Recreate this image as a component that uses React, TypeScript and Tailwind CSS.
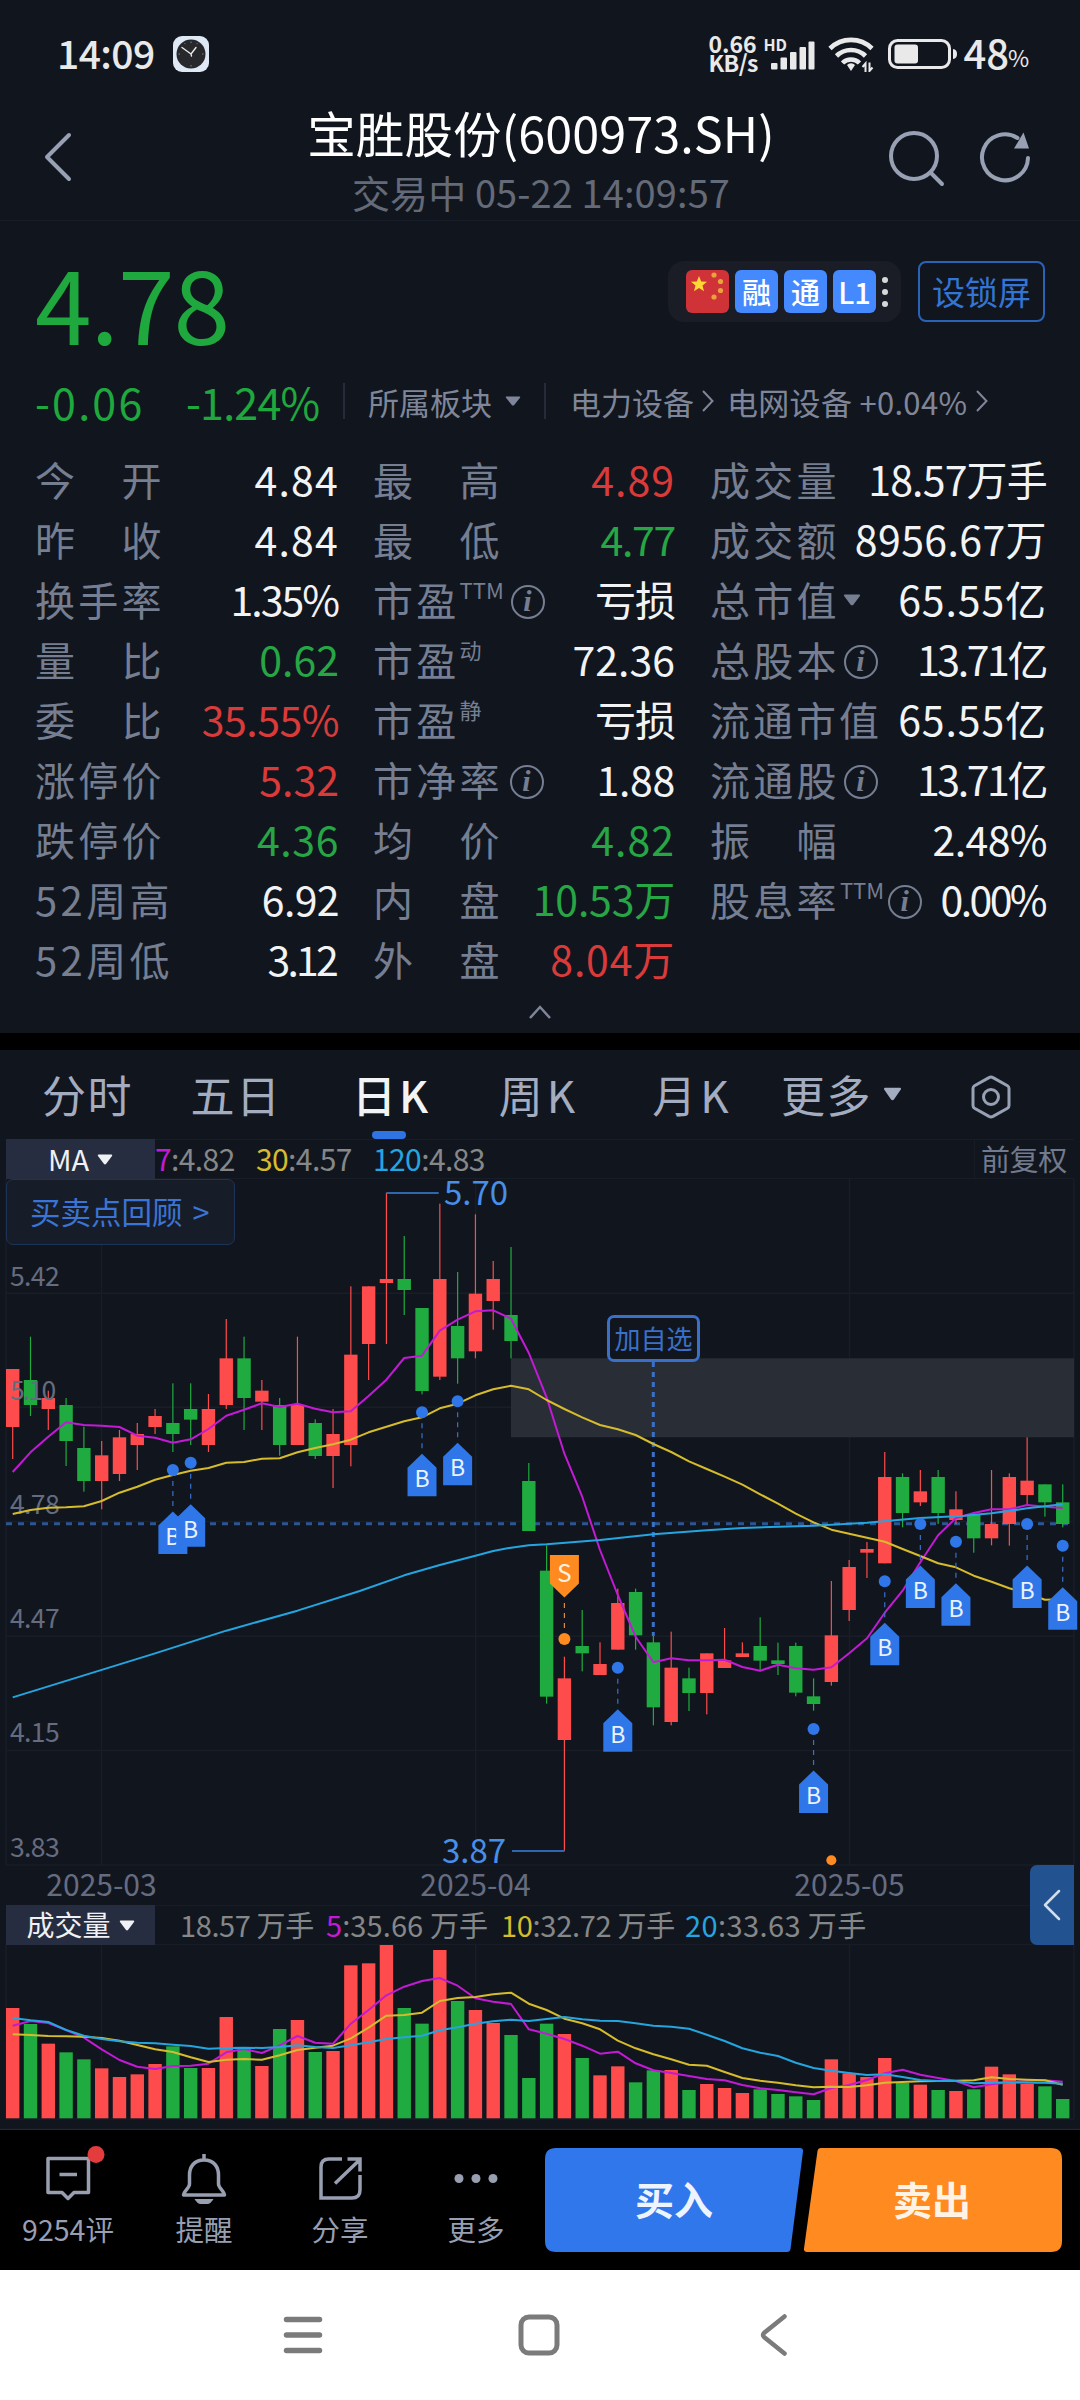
import type { ReactNode } from "react";

const RED = "#fe4b4b";
const GREEN = "#1fab3f";
const PURPLE = "#c31ad6";
const YELLOW = "#d6bc2c";
const CYAN = "#25a5e0";
const BLUE = "#2f77e9";

/* ---------- chart data ---------- */

const STEP = 17.797;
const X0 = 12.7;
const cx = (i: number) => X0 + STEP * i;
// Price-panel values are stored in thirds of a pixel below y = 1180.
const py = (v: number) => 1180 + v / 3;
// Volume-panel values are stored in thirds of a pixel below y = 1860.
const vy = (v: number) => 1860 + v / 3;

// [rising, body top, body bottom, high, low]
const candles: [number, number, number, number, number][] = [
  [1, 567, 741, 567, 837], [0, 600, 675, 470, 708], [1, 654, 687, 632, 750], [0, 675, 783, 654, 858],
  [0, 804, 903, 740, 935], [1, 826, 903, 783, 988], [1, 772, 882, 750, 903], [1, 762, 795, 729, 870],
  [1, 708, 741, 687, 762], [0, 729, 762, 610, 816], [0, 687, 719, 610, 795], [1, 687, 795, 642, 816],
  [1, 535, 675, 417, 687], [0, 535, 654, 470, 750], [1, 632, 665, 600, 750], [0, 675, 795, 654, 827],
  [1, 675, 795, 470, 795], [0, 729, 828, 718, 837], [1, 762, 828, 687, 924], [1, 524, 795, 319, 859],
  [1, 319, 492, 319, 600], [1, 297, 309, 38, 492], [0, 297, 330, 168, 405], [0, 384, 633, 384, 643],
  [1, 297, 590, 71, 600], [0, 438, 535, 276, 611], [1, 341, 514, 103, 535], [1, 297, 363, 243, 449],
  [0, 405, 483, 201, 535], [0, 903, 1053, 849, 1053], [0, 1172, 1550, 1096, 1571], [1, 1495, 1680, 1430, 2013],
  [0, 1398, 1420, 1290, 1474], [1, 1452, 1485, 1387, 1485], [1, 1269, 1409, 1226, 1409], [0, 1236, 1366, 1226, 1409],
  [0, 1387, 1582, 1366, 1636], [1, 1463, 1626, 1355, 1636], [0, 1495, 1539, 1463, 1593], [1, 1420, 1539, 1420, 1603],
  [1, 1441, 1464, 1344, 1464], [1, 1420, 1431, 1387, 1431], [0, 1398, 1442, 1312, 1474], [0, 1441, 1452, 1388, 1485],
  [0, 1398, 1538, 1388, 1549], [0, 1549, 1572, 1495, 1592], [1, 1366, 1506, 1203, 1517], [1, 1161, 1290, 1140, 1323],
  [1, 1107, 1118, 1086, 1194], [1, 891, 1150, 816, 1150], [0, 891, 999, 880, 1042], [1, 934, 967, 870, 978],
  [0, 891, 999, 870, 1032], [1, 988, 1020, 934, 1032], [0, 1005, 1075, 1000, 1118], [1, 1032, 1075, 870, 1096],
  [1, 891, 1032, 880, 1097], [1, 902, 945, 772, 972], [0, 913, 967, 913, 1010], [0, 967, 1032, 913, 1042],
];

const ma7 = [
  876, 817, 770, 727, 735, 737, 741, 767, 773, 788, 778, 747, 707, 689, 670, 681, 671, 686, 697, 694,
  648, 599, 534, 527, 452, 419, 394, 391, 416, 519, 652, 821, 950, 1110, 1245, 1370, 1447, 1435, 1441, 1441,
  1439, 1461, 1472, 1454, 1465, 1469, 1462, 1420, 1375, 1298, 1232, 1147, 1066, 1014, 999, 988, 988, 975, 980, 984,
];
const ma30 = [
  1002, 990, 983, 982, 979, 963, 938, 920, 899, 885, 872, 864, 848, 846, 836, 835, 817, 804, 793, 779,
  757, 740, 724, 712, 685, 671, 646, 628, 617, 628, 660, 687, 712, 735, 748, 765, 792, 816, 844, 867,
  890, 914, 943, 971, 1001, 1027, 1049, 1061, 1073, 1085, 1107, 1128, 1150, 1162, 1187, 1205, 1225, 1240, 1259, 1258,
];
const ma120: [number, number][] = [
  [0, 1552], [4, 1486], [8, 1420], [12, 1352], [16, 1292], [19.5, 1233], [22, 1186], [24, 1155], [26, 1127],
  [27, 1113], [28, 1103], [29, 1096], [30, 1093], [33, 1080], [36, 1063], [39, 1051], [41, 1044], [45, 1037],
  [48, 1028], [51, 1014], [53.5, 1007], [55, 1000], [57, 985], [59, 973],
];

const volume = [
  444, 492, 551, 577, 598, 625, 651, 643, 612, 559, 624, 624, 471, 562, 618, 507, 480, 576, 573, 316,
  310, 255, 444, 491, 270, 423, 450, 489, 525, 654, 491, 522, 594, 646, 619, 667, 631, 630, 690, 672,
  684, 699, 688, 702, 709, 720, 598, 640, 651, 594, 669, 674, 690, 693, 688, 620, 643, 672, 679, 717,
];
const vma5 = [
  497, 483, 489, 510, 533, 568, 600, 620, 627, 618, 617, 611, 577, 567, 579, 556, 528, 548, 551, 491,
  450, 406, 380, 363, 354, 377, 415, 425, 432, 508, 521, 537, 557, 581, 575, 610, 631, 639, 648, 657,
  661, 675, 685, 690, 697, 703, 684, 675, 660, 640, 629, 644, 654, 663, 682, 673, 667, 663, 661, 665,
];
const vma10 = [
  523, 525, 528, 529, 530, 534, 542, 555, 568, 576, 592, 606, 599, 597, 599, 586, 570, 563, 557, 535,
  503, 467, 465, 458, 423, 414, 411, 403, 398, 431, 450, 476, 490, 508, 542, 565, 583, 598, 614, 617,
  636, 654, 662, 668, 676, 682, 680, 681, 676, 668, 666, 664, 663, 662, 661, 652, 657, 659, 661, 674,
];
const vma20 = [
  474, 481, 486, 510, 527, 537, 544, 548, 550, 554, 558, 566, 564, 563, 564, 561, 556, 561, 564, 556,
  547, 537, 532, 527, 511, 502, 491, 484, 479, 483, 477, 471, 478, 482, 483, 490, 497, 500, 506, 524,
  543, 565, 578, 588, 608, 624, 632, 639, 645, 643, 651, 660, 663, 663, 670, 668, 667, 668, 668, 671,
];

const buys: [number, number][] = [
  [9, 870], [10, 848], [23, 697], [25, 664], [34, 1463], [45, 1647], [49, 1204], [51, 1032], [53, 1085], [57, 1032], [59, 1097],
];

const line = (vals: number[], y: (v: number) => number) =>
  vals.map((v, i) => `${cx(i).toFixed(1)},${y(v).toFixed(1)}`).join(" ");

/* ---------- small pieces ---------- */

function Triangle({ w, h, className }: { w: number; h: number; className?: string }) {
  return (
    <svg width={w} height={h} viewBox="0 0 16 11" preserveAspectRatio="none" className={className}>
      <path d="M1.5 0.5h13q1.2 0.3 0.5 1.4L9.2 9.8q-1.2 1.2-2.4 0L1 1.9Q0.3 0.8 1.5 0.5z" fill="currentColor" />
    </svg>
  );
}

function Info({ className = "" }: { className?: string }) {
  return (
    <span
      className={`flex h-[34px] w-[34px] shrink-0 items-center justify-center rounded-full border-2 border-[#767e92] pb-[2px] pr-[1px] font-['Liberation_Serif',serif] text-[30px] leading-none font-bold italic ${className}`}
    >
      i
    </span>
  );
}

function Chevron({ className = "" }: { className?: string }) {
  return (
    <svg width="14" height="24" viewBox="0 0 14 24" className={className}>
      <path d="M2 2l9.5 10L2 22" fill="none" stroke="currentColor" strokeWidth="2" />
    </svg>
  );
}

/* ---------- status bar and title ---------- */

function StatusBar() {
  return (
    <div className="flex h-[100px] items-center pt-[8px] pr-[50px] pl-[57px] text-[#e9e9ea]">
      <span className="-mt-[4px] w-[116px] text-[39px] leading-none font-medium tracking-[-0.6px]">14:09</span>
      <svg width="36" height="36" viewBox="0 0 36 36">
        <rect width="36" height="36" rx="9" fill="#dfe8f5" />
        <circle cx="18" cy="18" r="14.5" fill="#26282b" />
        <path d="M18 18L9 11.5M18 18l5-6.5M18 18l0.5 2" stroke="#e8e8e8" strokeWidth="1.4" strokeLinecap="round" />
        <path d="M18 5.500v1.500M18 29v1.500M5.500 18h1.500M29 18h1.500M11.700 7.200l.5.900M24.300 7.200l-.5.900" stroke="#9a9a9a" strokeWidth="0.8" />
      </svg>
      <div className="ml-auto flex items-center">
        <div className="-mt-[3px] flex w-[56px] flex-col text-[23px] leading-[19px] font-bold">
          <span>0.66</span>
          <span className="tracking-[-0.6px]">KB/s</span>
        </div>
        <div className="relative mr-[13px] h-[34px] w-[51px]">
          <span className="absolute top-0 left-[-1px] text-[16px] leading-[14px] font-bold">HD</span>
          <svg width="51" height="34" viewBox="0 0 51 34" fill="currentColor" className="absolute inset-0">
            <rect x="7" y="26" width="6.500" height="6.500" rx="1" />
            <rect x="16.500" y="20.500" width="6.500" height="12" rx="1" />
            <rect x="26" y="15" width="6.500" height="17.500" rx="1" />
            <rect x="35.500" y="10" width="6.500" height="22.500" rx="1" />
            <rect x="44.500" y="4.500" width="6" height="28" rx="1" />
          </svg>
        </div>
        <svg width="46" height="35" viewBox="0 0 46 35" className="mr-[14px]">
          <g fill="none" stroke="currentColor" strokeWidth="4.600">
            <path d="M2 11.500a30 30 0 0 1 42 0" />
            <path d="M8.500 19a20.500 20.500 0 0 1 29 0" />
            <path d="M14.500 26a12 12 0 0 1 17 0" />
          </g>
          <path d="M19 28a5.500 5.500 0 0 1 8 0l-4 6z" fill="currentColor" />
          <path d="M37.500 35V26.500l-3 3.500M41.500 25.500v8.500l3-3.500" stroke="currentColor" strokeWidth="2" fill="none" />
        </svg>
        <svg width="70" height="30" viewBox="0 0 70 30" className="mr-[5px]">
          <rect x="1.500" y="1.500" width="60" height="27" rx="8" fill="none" stroke="currentColor" strokeWidth="3" />
          <rect x="6.500" y="5.500" width="23.500" height="19" rx="3" fill="currentColor" />
          <path d="M65 10q4 0.500 4 5t-4 5z" fill="currentColor" />
        </svg>
        <span className="-mt-[5px] text-[40px] leading-none font-medium">48</span>
        <span className="mt-[7px] -ml-[1px] w-[22px] text-[23px] leading-none">%</span>
      </div>
    </div>
  );
}

function Header() {
  return (
    <div className="flex h-[121px] items-start border-b border-[#171c26] pl-[43px]">
      <svg width="30" height="50" viewBox="0 0 30 50" fill="none" className="mt-[32px]">
        <path d="M26 3L4 25l22 22" stroke="#98a0b4" strokeWidth="4" strokeLinecap="round" strokeLinejoin="round" />
      </svg>
      <div className="ml-[173px] flex w-[590px] flex-col items-center">
        <h1 className="mt-[4px] text-[48.500px] leading-[56px] tracking-[0.100px] whitespace-nowrap text-white">宝胜股份(600973.SH)</h1>
        <p className="mt-[10px] text-[38px] leading-[44px] tracking-[0.100px] whitespace-nowrap text-[#646a78]">交易中 05-22 14:09:57</p>
      </div>
      <svg width="60" height="60" viewBox="0 0 60 60" fill="none" className="mt-[30px] ml-[50px] shrink-0" stroke="#98a0b4" strokeWidth="4" strokeLinecap="round">
        <circle cx="28" cy="26" r="23" />
        <path d="M44.500 42.500L56 54" />
      </svg>
      <svg width="54" height="60" viewBox="0 0 54 60" fill="none" className="mt-[30px] ml-[33px] shrink-0">
        <path d="M49 28A23 23 0 1 1 38.500 8" stroke="#98a0b4" strokeWidth="4" strokeLinecap="round" />
        <path d="M44.500 2.500l5.500 16h-15z" fill="#98a0b4" />
      </svg>
    </div>
  );
}

/* ---------- quote ---------- */

function Badge({ children }: { children: ReactNode }) {
  return (
    <span className="flex h-[43px] w-[43px] items-center justify-center rounded-[6px] bg-[#4589ff] text-[29px] leading-none font-medium text-white">
      {children}
    </span>
  );
}

function Quote() {
  return (
    <>
      <div className="flex h-[141px] items-start pr-[35px] pl-[35px]">
        <span className="mt-[28px] text-[102px] leading-[104px] tracking-[-1px] text-[#1fa83d]">4.78</span>
        <div className="mt-[40px] ml-auto flex h-[61px] w-[233px] items-center gap-[6px] rounded-[16px] bg-[#1a1d26] pl-[18px]">
          <svg width="43" height="43" viewBox="0 0 43 43">
            <rect width="43" height="43" rx="6" fill="#cf3338" />
            <path d="M13 6l2.200 5.500 5.800.3-4.500 3.800 1.500 5.700-5-3.200-5 3.200 1.500-5.700L5 11.800l5.800-.3z" fill="#fdd835" />
            <g fill="#e8a33a">
              <circle cx="28" cy="5" r="2.600" />
              <circle cx="34.500" cy="11.500" r="2.600" />
              <circle cx="34.500" cy="20.500" r="2.600" />
              <circle cx="28" cy="27" r="2.600" />
            </g>
          </svg>
          <Badge>融</Badge>
          <Badge>通</Badge>
          <Badge>L1</Badge>
          <div className="flex flex-col gap-[6px]">
            <i className="h-[6px] w-[6px] rounded-full bg-[#d8d8da]" />
            <i className="h-[6px] w-[6px] rounded-full bg-[#d8d8da]" />
            <i className="h-[6px] w-[6px] rounded-full bg-[#d8d8da]" />
          </div>
        </div>
        <button className="mt-[40px] ml-[17px] h-[61px] w-[127px] rounded-[8px] border-2 border-[#2a62b8] text-[33px] leading-none whitespace-nowrap text-[#3474d4]">
          设锁屏
        </button>
      </div>
      <div className="flex h-[87px] items-center pb-[9px] pl-[35px] text-[31px] leading-none text-[#7f8699]">
        <span className="w-[151px] text-[43px] tracking-[2.200px] text-[#1fa83d]">-0.06</span>
        <span className="w-[157px] text-[43px] tracking-[-0.800px] text-[#1fa83d]">-1.24%</span>
        <i className="h-[36px] w-[2px] bg-[#262b3a]" />
        <span className="ml-[23px]">所属板块</span>
        <Triangle w={16} h={10} className="ml-[13px]" />
        <i className="ml-[23px] h-[36px] w-[2px] bg-[#262b3a]" />
        <span className="ml-[24px]">电力设备</span>
        <Chevron className="ml-[7px]" />
        <span className="ml-[12px] tracking-[0.300px] whitespace-nowrap">电网设备 +0.04%</span>
        <Chevron className="ml-[8px]" />
      </div>
    </>
  );
}

type Cell = { label: string; sup?: string; info?: boolean; menu?: boolean; value: string; cls: string };

const W = "text-[#f2f3f5]";
const R = "text-[#d93a3a]";
const G = "text-[#26a644]";

const columns: Cell[][] = [
  [
    { label: "今　开", value: "4.84", cls: `${W} tracking-[1.2px]` },
    { label: "昨　收", value: "4.84", cls: `${W} tracking-[1.2px]` },
    { label: "换手率", value: "1.35%", cls: `${W} tracking-[-2px] pr-[1px]` },
    { label: "量　比", value: "0.62", cls: `${G}` },
    { label: "委　比", value: "35.55%", cls: `${R} tracking-[-0.5px]` },
    { label: "涨停价", value: "5.32", cls: `${R}` },
    { label: "跌停价", value: "4.36", cls: `${G} tracking-[0.6px]` },
    { label: "52周高", value: "6.92", cls: `${W} tracking-[-0.6px]` },
    { label: "52周低", value: "3.12", cls: `${W} tracking-[-2.8px] pr-[3px]` },
  ],
  [
    { label: "最　高", value: "4.89", cls: `${R} tracking-[1px]` },
    { label: "最　低", value: "4.77", cls: `${G} tracking-[-1.3px]` },
    { label: "市盈", sup: "TTM", info: true, value: "亏损", cls: `${W} tracking-[-1px]` },
    { label: "市盈", sup: "动", value: "72.36", cls: `${W}` },
    { label: "市盈", sup: "静", value: "亏损", cls: `${W} tracking-[-1px]` },
    { label: "市净率", info: true, value: "1.88", cls: `${W} tracking-[-0.3px]` },
    { label: "均　价", value: "4.82", cls: `${G} tracking-[1px]` },
    { label: "内　盘", value: "10.53万", cls: `${G} tracking-[-0.2px]` },
    { label: "外　盘", value: "8.04万", cls: `${R} tracking-[0.8px]` },
  ],
  [
    { label: "成交量", value: "18.57万手", cls: `${W} tracking-[-0.8px]` },
    { label: "成交额", value: "8956.67万", cls: `${W} tracking-[0.4px]` },
    { label: "总市值", menu: true, value: "65.55亿", cls: `${W} tracking-[0.9px]` },
    { label: "总股本", info: true, value: "13.71亿", cls: `${W} tracking-[-2.4px] pr-[1px]` },
    { label: "流通市值", value: "65.55亿", cls: `${W} tracking-[0.9px]` },
    { label: "流通股", info: true, value: "13.71亿", cls: `${W} tracking-[-2.4px] pr-[1px]` },
    { label: "振　幅", value: "2.48%", cls: `${W} tracking-[-0.6px]` },
    { label: "股息率", sup: "TTM", info: true, value: "0.00%", cls: `${W} tracking-[-2.6px] pr-[2px]` },
  ],
];

function Stats() {
  return (
    <div className="flex h-[540px] pl-[35px] text-[#767e92]">
      {columns.map((col, c) => (
        <div key={c} className={["w-[304px]", "ml-[34px] w-[302px]", "ml-[35px] w-[337px]"][c]}>
          {col.map((cell) => (
            <div key={cell.label + (cell.sup ?? "")} className="flex h-[60px] items-center pb-[1px] whitespace-nowrap">
              <span
                className={`text-[40px] leading-none ${cell.label.startsWith("52") ? "tracking-[3.400px]" : cell.label.length > 3 ? "tracking-[3px]" : "tracking-[3.300px]"}`}
              >
                {cell.label}
              </span>
              {cell.sup && <sup className="top-0 -mt-[20px] text-[22px] leading-none">{cell.sup}</sup>}
              {cell.info && <Info className={c === 1 ? "mt-[7px] ml-[7px]" : "mt-[7px] ml-[4px]"} />}
              {cell.menu && <Triangle w={18} h={12} className="mt-[2px] ml-[3px]" />}
              <span className={`ml-auto text-[41px] leading-none ${cell.cls}`}>{cell.value}</span>
            </div>
          ))}
        </div>
      ))}
    </div>
  );
}

/* ---------- chart ---------- */

function Tabs() {
  return (
    <div className="relative flex h-[89px] items-center pb-[2px] pl-[12px] text-center text-[44px] leading-none tracking-[1.500px] whitespace-nowrap text-[#a4acc0]">
      <span className="w-[151px]">分时</span>
      <span className="w-[146px]">五日</span>
      <span className="relative flex h-[87px] w-[165px] items-center justify-center font-medium tracking-[3px] text-[#f2f3f5]">
        日K
        <i className="absolute -bottom-[2px] left-[63px] h-[8px] w-[34px] rounded-full bg-[#2f74e4]" />
      </span>
      <span className="w-[130px] tracking-[4px]">周K</span>
      <span className="w-[177px] tracking-[4px]">月K</span>
      <span className="flex w-[121px] items-center justify-center">
        更多
        <Triangle w={20} h={14} className="ml-[11px]" />
      </span>
      <svg width="42" height="46" viewBox="0 0 42 46" fill="none" stroke="#98a0b4" strokeWidth="3" className="mt-[6px] ml-[68px]">
        <path d="M21 3q1 0 2 .6l14.500 8.200q1.500.9 1.500 2.700v17q0 1.800-1.500 2.700L23 42.400q-2 1-4 0L4.500 34.200Q3 33.300 3 31.500v-17q0-1.800 1.500-2.700L19 3.600q1-.6 2-.6z" />
        <circle cx="21" cy="23" r="7.500" />
      </svg>
    </div>
  );
}

function MaBar() {
  return (
    <div className="mx-[6px] flex h-[40px] items-center border-y border-[#171c26] text-[30px] leading-none tracking-[-0.600px] text-[#858789]">
      <div className="flex h-[40px] w-[149px] shrink-0 items-center justify-center bg-[#272d40] pb-[2px] text-[29px] tracking-normal text-[#f0f1f4]">
        MA
        <Triangle w={16} h={11} className="mt-[3px] ml-[8px]" />
      </div>
      <span className="w-[101px] pb-[2px]">
        <span className="text-[#c31ad6]">7</span>:4.82
      </span>
      <span className="w-[117px] pb-[2px]">
        <span className="text-[#d6bc2c]">30</span>:4.57
      </span>
      <span className="pb-[2px]">
        <span className="text-[#25a5e0]">120</span>:4.83
      </span>
      <span className="ml-auto flex h-full items-center border-l border-[#171c26] pr-[7px] pb-[2px] pl-[6px] text-[29px] tracking-[-0.300px] text-[#727a8e]">
        前复权
      </span>
    </div>
  );
}

function PriceChart() {
  return (
    <div className="relative h-[726px]">
      <svg width="1080" height="726" viewBox="0 1179 1080 726" className="block" fontFamily="'Noto Sans CJK SC', sans-serif">
        <g stroke="#181d27" strokeWidth="1.500">
          {[1293.3, 1407.3, 1521.5, 1636.3, 1750.5, 1865].map((y) => (
            <line key={y} x1="6" x2="1074" y1={y} y2={y} />
          ))}
          {[6, 101.5, 475.700, 849.500, 1074].map((x) => (
            <line key={x} x1={x} x2={x} y1="1179" y2="1865" />
          ))}
        </g>
        <rect x="511" y="1358.300" width="563" height="79" fill="#292d36" />
        <line x1="6" x2="1070" y1="1523.700" y2="1523.700" stroke="#2c5596" strokeWidth="3" strokeDasharray="6 6" />
        {candles.map(([up, top, bottom, high, low], i) => (
          <g key={i} fill={up ? RED : GREEN}>
            <rect x={cx(i) - 0.6} y={py(high)} width="1.200" height={(low - high) / 3} />
            <rect x={cx(i) - 6.7} y={py(top)} width="13.400" height={(bottom - top) / 3} />
          </g>
        ))}
        <g fill="#656c80" fontSize="26.500" letterSpacing="-0.600">
          <text x="10" y="1285.500">5.42</text>
          <text x="10" y="1399.500" letterSpacing="-1.800">5.10</text>
          <text x="10" y="1514">4.78</text>
          <text x="10" y="1628">4.47</text>
          <text x="10" y="1742">4.15</text>
          <text x="10" y="1856.500">3.83</text>
        </g>
        <line x1="653.300" x2="653.300" y1="1362" y2="1636" stroke="#3a70c8" strokeWidth="3" strokeDasharray="5 5" />
        <g fill="none" strokeWidth="2" strokeLinejoin="round">
          <polyline points={line(ma7, py)} stroke={PURPLE} />
          <polyline points={line(ma30, py)} stroke={YELLOW} />
          <polyline points={ma120.map(([i, v]) => `${cx(i)},${py(v)}`).join(" ")} stroke={CYAN} />
        </g>
        <g stroke="#2f66ad" strokeWidth="2">
          <line x1="386.500" x2="438.700" y1="1193" y2="1193" />
          <line x1="512" x2="564.500" y1="1851" y2="1851" />
        </g>
        <g fill="#478fe8" fontSize="33">
          <text x="444" y="1205">5.70</text>
          <text x="442" y="1863">3.87</text>
        </g>
        {buys.map(([i, v]) => (
          <g key={i} transform={`translate(${cx(i)} ${py(v)})`}>
            <line y1="11" y2="38" stroke="#3a70c8" strokeWidth="1.200" strokeDasharray="5 5" />
            <circle r="6" fill={BLUE} />
            <path d="M0 41.500L14.500 55.500V84h-29V55.500z" fill={BLUE} />
            <text y="75" textAnchor="middle" fontSize="23" fill="#eaf2ff">B</text>
          </g>
        ))}
        <g transform={`translate(${cx(31)} ${py(1377)})`}>
          <line y1="-36" y2="-10" stroke="#e08a3a" strokeWidth="1.200" strokeDasharray="5 5" />
          <circle r="6" fill="#ff8b20" />
          <path d="M0 -41.500L14.500 -55.500V-84h-29V-55.500z" fill="#ff8b20" />
          <text y="-57" textAnchor="middle" fontSize="24" fill="#fff1e2">S</text>
        </g>
        <circle cx={cx(46)} cy={py(2041)} r="5" fill="#ff8b20" />
        <g fill="#666c80" fontSize="30" textAnchor="middle">
          <text x="101.500" y="1896">2025-03</text>
          <text x="475.500" y="1896">2025-04</text>
          <text x="849.500" y="1896">2025-05</text>
        </g>
      </svg>
      <button className="absolute top-0 left-[6px] flex h-[66px] w-[229px] items-center rounded-[7px] border border-[#1d3358] bg-[#171d28] pb-[2px] pl-[23px] text-[30.500px] leading-none whitespace-nowrap text-[#3a74d6]">
        买卖点回顾<span className="ml-[10px]">&gt;</span>
      </button>
      <div className="absolute top-[136px] left-[607px] flex h-[47px] w-[93px] items-center justify-center rounded-[7px] border-3 border-[#3a70c8] bg-[#11161e] pb-[2px] text-[26px] leading-none whitespace-nowrap text-[#3a70c8]">
        加自选
      </div>
      <div className="absolute top-[686px] right-[6px] z-10 flex h-[80px] w-[44px] items-center justify-center rounded-l-[7px] bg-[#225390]">
        <svg width="20" height="32" viewBox="0 0 20 32" fill="none">
          <path d="M17 2L3 16l14 14" stroke="#d3deec" strokeWidth="2.500" strokeLinecap="round" strokeLinejoin="round" />
        </svg>
      </div>
    </div>
  );
}

function VolumePanel() {
  return (
    <>
      <div className="mx-[6px] flex h-[40px] items-center border-y border-[#171c26] text-[29px] leading-none whitespace-nowrap text-[#858789]">
        <div className="flex h-[40px] w-[149px] shrink-0 items-center justify-center bg-[#272d40] pb-[2px] text-[28px] text-[#f0f1f4]">
          成交量
          <Triangle w={16} h={11} className="mt-[3px] ml-[8px]" />
        </div>
        <span className="ml-[25px] w-[146px] pb-[2px] tracking-[-0.400px]">18.57 万手</span>
        <span className="w-[175px] pb-[2px] tracking-[0.100px]">
          <span className="text-[#c31ad6]">5</span>:35.66 万手
        </span>
        <span className="w-[184px] pb-[2px] tracking-[-0.300px]">
          <span className="text-[#d6bc2c]">10</span>:32.72 万手
        </span>
        <span className="pb-[2px] tracking-[0.400px]">
          <span className="text-[#25a5e0]">20</span>:33.63 万手
        </span>
      </div>
      <svg width="1080" height="185" viewBox="0 1945 1080 185" className="block shrink-0">
        <g stroke="#181d27" strokeWidth="1.500">
          {[6, 101.5, 475.700, 849.500, 1074].map((x) => (
            <line key={x} x1={x} x2={x} y1="1945" y2="2119" />
          ))}
          <line x1="6" x2="1074" y1="2119" y2="2119" />
          <line x1="0" x2="1080" y1="2129.500" y2="2129.500" stroke="#24272f" />
        </g>
        {volume.map((v, i) => (
          <rect key={i} x={cx(i) - 6.7} y={vy(v)} width="13.400" height={2118.3 - vy(v)} fill={candles[i][0] ? RED : GREEN} />
        ))}
        <g fill="none" strokeWidth="2" strokeLinejoin="round">
          <polyline points={line(vma5, vy)} stroke={PURPLE} />
          <polyline points={line(vma10, vy)} stroke={YELLOW} />
          <polyline points={line(vma20, vy)} stroke={CYAN} />
        </g>
      </svg>
    </>
  );
}

/* ---------- bottom ---------- */

function Action({ icon, label }: { icon: ReactNode; label: string }) {
  return (
    <div className="flex w-[136px] flex-col items-center text-[#989fb1]">
      <div className="mt-[22px] flex h-[56px] items-center">{icon}</div>
      <span className="mt-[4px] text-[28.500px] leading-[34px]">{label}</span>
    </div>
  );
}

function ActionBar() {
  return (
    <div className="flex h-[140px] bg-black">
      <Action
        label="9254评"
        icon={
          <svg width="60" height="56" viewBox="0 0 60 56" fill="none" stroke="currentColor" strokeWidth="3.500" strokeLinejoin="round" className="overflow-visible">
            <path d="M10 6.500h40.500v34H36l-6 6-6-6H10z" />
            <path d="M21.500 22.500h17.500" />
            <circle cx="58" cy="2.500" r="8.500" fill="#e23c3c" stroke="none" />
          </svg>
        }
      />
      <Action
        label="提醒"
        icon={
          <svg width="50" height="56" viewBox="0 0 50 56" fill="none" stroke="currentColor" strokeWidth="3.500" strokeLinejoin="round">
            <path d="M25 2v6M25 8C15 8 10.500 15 10.500 23v9c0 4-5.500 7-6 11h41c-.5-4-6-7-6-11v-9C39.500 15 35 8 25 8z" />
            <path d="M15.500 47h19q-3 5-6 5h-7q-3 0-6-5z" fill="currentColor" stroke="none" />
          </svg>
        }
      />
      <Action
        label="分享"
        icon={
          <svg width="50" height="56" viewBox="0 0 50 56" fill="none" stroke="currentColor" strokeWidth="3.500">
            <path d="M27 7H14Q6 7 6 15v31h31q8 0 8-8V23" />
            <path d="M20 31.500L44 8.500M32.500 7H45v12.500" />
          </svg>
        }
      />
      <Action
        label="更多"
        icon={
          <svg width="50" height="56" viewBox="0 0 50 56" fill="currentColor">
            <circle cx="8" cy="26.500" r="4.500" />
            <circle cx="25" cy="26.500" r="4.500" />
            <circle cx="42" cy="26.500" r="4.500" />
          </svg>
        }
      />
      <button className="relative mt-[18px] ml-[1px] h-[104px] w-[258px] pb-[3px] text-[39px] leading-none font-bold text-[#eef4ff]">
        <svg width="258" height="104" viewBox="0 0 258 104" className="absolute inset-0">
          <path d="M11 0H255q3.500 0 3 3.500L245.500 101q-.5 3-3.500 3H11Q0 104 0 93V11Q0 0 11 0z" fill="#3077eb" />
        </svg>
        <span className="relative">买入</span>
      </button>
      <button className="relative mt-[18px] ml-[1px] h-[104px] w-[258px] pr-[2px] pb-[3px] text-[39px] leading-none font-bold text-[#fff3e6]">
        <svg width="258" height="104" viewBox="0 0 258 104" className="absolute inset-0">
          <path d="M17 0H247Q258 0 258 11V93Q258 104 247 104H3q-3.500 0-3-3.500L13.500 3q.5-3 3.500-3z" fill="#ff8b20" />
        </svg>
        <span className="relative">卖出</span>
      </button>
    </div>
  );
}

function NavBar() {
  return (
    <div className="flex h-[130px] items-center bg-white pl-[282px]">
      <svg width="42" height="42" viewBox="0 0 42 42" stroke="#7b7b7b" strokeWidth="5.500" strokeLinecap="round">
        <path d="M4.500 5.500h33M4.500 21h33M4.500 36.500h33" />
      </svg>
      <svg width="42" height="42" viewBox="0 0 42 42" fill="none" className="ml-[194px]">
        <rect x="3" y="3" width="36" height="36" rx="8" stroke="#7b7b7b" strokeWidth="5" />
      </svg>
      <svg width="32" height="44" viewBox="0 0 32 44" fill="none" className="ml-[197px]">
        <path d="M27.500 3.500L7 20q-2 2 0 4l20.500 16.500" stroke="#7b7b7b" strokeWidth="4.500" strokeLinecap="round" />
      </svg>
    </div>
  );
}

export default function App() {
  return (
    <div className="flex h-[2400px] w-[1080px] flex-col overflow-hidden bg-[#11161e] font-['Noto_Sans_CJK_SC',sans-serif] *:shrink-0">
      <StatusBar />
      <Header />
      <Quote />
      <Stats />
      <div className="flex h-[44px] items-center justify-center pt-[2px]">
        <svg width="24" height="16" viewBox="0 0 24 16" fill="none">
          <path d="M2 14L12 3l10 11" stroke="#7f8699" strokeWidth="2.500" />
        </svg>
      </div>
      <div className="h-[17px] bg-black" />
      <Tabs />
      <MaBar />
      <PriceChart />
      <VolumePanel />
      <ActionBar />
      <NavBar />
    </div>
  );
}
